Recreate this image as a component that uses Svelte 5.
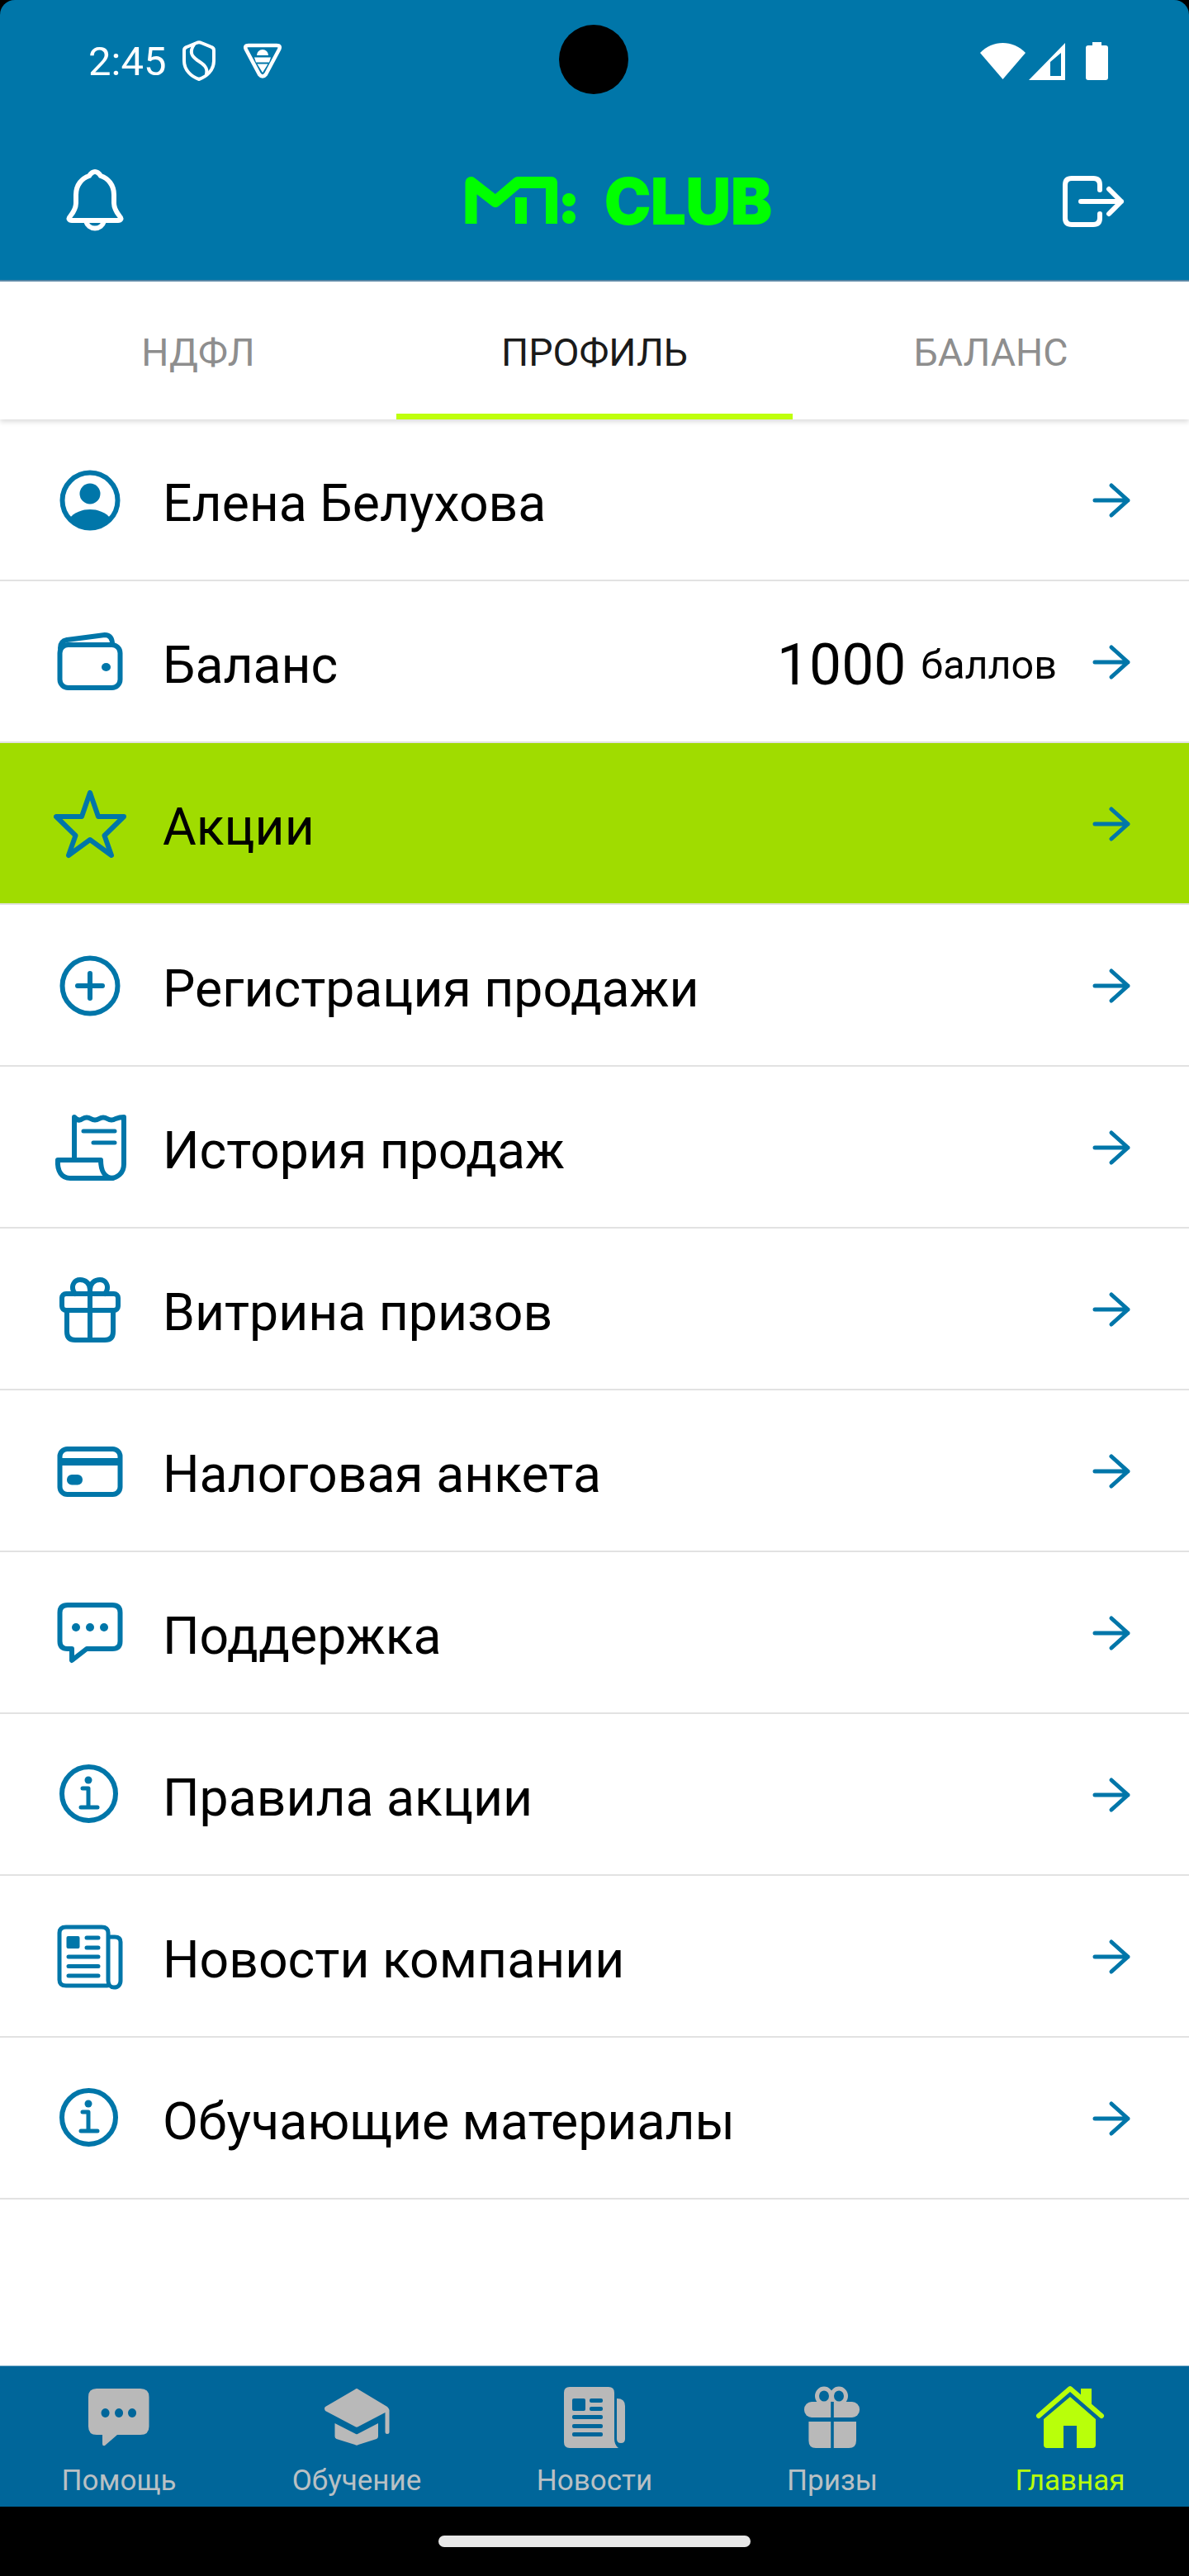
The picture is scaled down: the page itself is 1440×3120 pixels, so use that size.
<script>
    const tabs = [
        { label: "НДФЛ" },
        { label: "Профиль", active: true },
        { label: "Баланс" }
    ]

    const rows = [
        { icon: "person", label: "Елена Белухова" },
        { icon: "wallet", label: "Баланс", points: 1000 },
        { icon: "star", label: "Акции", promo: true },
        { icon: "plus", label: "Регистрация продажи" },
        { icon: "receipt", label: "История продаж" },
        { icon: "gift", label: "Витрина призов" },
        { icon: "card", label: "Налоговая анкета" },
        { icon: "chat", label: "Поддержка" },
        { icon: "info", label: "Правила акции" },
        { icon: "news", label: "Новости компании" },
        { icon: "info", label: "Обучающие материалы" }
    ]

    const navItems = [
        { icon: "chat", label: "Помощь" },
        { icon: "cap", label: "Обучение" },
        { icon: "news", label: "Новости" },
        { icon: "gift", label: "Призы" },
        { icon: "home", label: "Главная", active: true }
    ]
</script>

<div class="screen">
    <header class="top">
        <div class="camera"></div>
        <div class="status">
            <div class="status-left">
                <span class="time">2:45</span>
                <svg class="st-shield" viewBox="-22 -26 44 52">
                    <path d="M-3 -22 Q0 -23.500 3 -22 L15 -17 Q18 -16 18 -13 V0 C18 11 9 19 0 22 C-9 19 -18 11 -18 0 V-13 Q-18 -16 -15 -17 Z" />
                    <path d="M-6 -20 C-12 -11 -9 -6 -2 -1 C6 4 11 8 9 16" />
                </svg>
                <svg class="st-android" viewBox="-25 -23 50 46">
                    <path d="M-17 -19 H17 Q22.500 -19 20 -14 L4 16 Q0 21 -4 16 L-20 -14 Q-22.500 -19 -17 -19 Z" />
                    <path class="solid" d="M-7 -7 A7 7 0 0 1 7 -7 Z M-10 -4.500 H10 L8 1.500 H-8 Z M-6.500 3.500 H6.500 L0 14 Z" />
                </svg>
            </div>
            <div class="status-right">
                <svg class="st-wifi" width="55" height="44" viewBox="0 0 55 44">
                    <path d="M0 12 C15 -4 40 -4 55 12 L27.500 44 Z" />
                </svg>
                <svg class="st-signal" width="44" height="45" viewBox="0 0 44 45">
                    <path fill-rule="evenodd" d="M0 45 L44 0 V45 Z M26 23 V40 H39 V12 Z" />
                </svg>
                <svg class="st-battery" width="27" height="46" viewBox="0 0 27 46">
                    <path d="M8 0 H19 V4 H24 Q27 4 27 7 V43 Q27 46 24 46 H3 Q0 46 0 43 V7 Q0 4 3 4 H8 Z" />
                </svg>
            </div>
        </div>

        <div class="toolbar">
            <svg class="tool-icon" width="88" height="88" viewBox="-44 -44 88 88">
                <path d="M0 -36 C3 -36 5 -34 7 -31 C16 -28 23 -20 23 -8 V2 C23 8 26 13 30 18 C33 21 31 23 28 23 H-28 C-31 23 -33 21 -30 18 C-26 13 -23 8 -23 2 V-8 C-23 -20 -16 -28 -7 -31 C-5 -34 -3 -36 0 -36 Z" />
                <path d="M-11 24 A11.500 12 0 0 0 11 24" />
            </svg>

            <div class="logo">
                <svg width="140" height="70" viewBox="0 0 140 70">
                    <polyline points="7.500,62 7.500,12 37,35 64,12 105,12 105,62" />
                    <line x1="68" y1="30" x2="68" y2="62" />
                    <circle class="dot" cx="126" cy="33" r="8" />
                    <circle class="dot" cx="126" cy="54" r="8" />
                </svg>
                <span class="logo-text">CLUB</span>
            </div>

            <svg class="tool-icon" width="88" height="88" viewBox="-44 -44 88 88">
                <path d="M7 -14 V-20 Q7 -28 -1 -28 H-27 Q-35 -28 -35 -20 V20 Q-35 28 -27 28 H-1 Q7 28 7 20 V15" />
                <path d="M-16 0 H33 M18 -15 L33 0 L18 15" />
            </svg>
        </div>
    </header>

    <nav class="tabs">
        {#each tabs as tab}
            <div class="tab" class:active={tab.active}>{tab.label}</div>
        {/each}
    </nav>

    <main class="list">
        {#each rows as row}
            <div class="row" class:promo={row.promo}>
                <svg class="row-icon" width="88" height="88" viewBox="-44 -44 88 88">
                    {#if row.icon === "person"}
                        <circle r="33.500" />
                        <circle class="f" cy="-8" r="12.500" />
                        <path class="f" d="M-26 23 C-19 14 -9 11 0 11 C9 11 19 14 26 23 C12 36 -12 36 -26 23 Z" />
                    {:else if row.icon === "wallet"}
                        <rect x="-36.500" y="-21" width="73" height="52" rx="10" />
                        <path d="M-36 -17 C-36 -23 -33 -26 -28 -27 L18 -33 C24 -33 27 -29 27 -22" />
                        <ellipse class="f" cx="19.500" cy="6" rx="5.500" ry="5" />
                    {:else if row.icon === "star"}
                        <path d="M0 -38 L10 -9 H41 L17.500 14 L26 38 L0 19 L-26 38 L-17.500 14 L-41 -9 H-10 Z" />
                    {:else if row.icon === "plus"}
                        <circle r="33.500" />
                        <path d="M-15 0 H15 M0 -15 V15" />
                    {:else if row.icon === "receipt"}
                        <path d="M-19 12 V-37 Q-14 -31 -9 -35 Q-4 -38 1 -35 Q6 -32 11 -35 Q16 -38 21 -35 Q26 -32 31 -35 Q36 -37 41 -37 V20 C41 31 33 37 24 37 H-24 C-34 37 -40 29 -39 15 H13 C13 28 18 37 28 37" />
                        <path class="thin" d="M-8 -20 H30 M4 -6 H30" />
                    {:else if row.icon === "gift"}
                        <rect x="-34" y="-19" width="68" height="20" rx="5" />
                        <path d="M-28 2 V27 Q-28 37 -18 37 H18 Q28 37 28 27 V2 M0 -19 V37" />
                        <path d="M0 -19 V-24 C0 -32 -6 -36 -12 -36 C-19 -36 -23 -29 -20 -22 L-18 -19 M0 -24 C0 -32 6 -36 12 -36 C19 -36 23 -29 20 -22 L18 -19" />
                    {:else if row.icon === "card"}
                        <rect x="-36.500" y="-27" width="73" height="55" rx="9" />
                        <rect class="f" x="-36" y="-16" width="72" height="9" />
                        <rect class="f" x="-28" y="4" width="19" height="12.500" rx="6" />
                    {:else if row.icon === "chat"}
                        <path d="M-27 -34 H27 Q36.500 -34 36.500 -25 V10 Q36.500 19 27 19 H-4 L-22 33 V19 H-27 Q-36.500 19 -36.500 10 V-25 Q-36.500 -34 -27 -34 Z" />
                        <circle class="f" cx="-17" cy="-7" r="5" />
                        <circle class="f" cy="-7" r="5" />
                        <circle class="f" cx="17" cy="-7" r="5" />
                    {:else if row.icon === "info"}
                        <circle cx="-1.500" cy="-1.500" r="32.500" />
                        <circle class="f" cx="-2" cy="-18" r="4.500" />
                        <path class="thin" d="M-9 -8 H-2 V14 M-11 15 H9" />
                    {:else if row.icon === "news"}
                        <path class="thin" d="M21 35 H-29 Q-37 35 -37 28 V-29 Q-37 -36 -29 -36 H14 Q22 -36 22 -29 V29 C22 34 25 37 29 37 C34 37 37 34 37 29 V-18 Q37 -24 30 -24 H22" />
                        <rect class="f" x="-28.500" y="-25" width="16" height="15" rx="2" />
                        <path class="thin" d="M-4 -23 H10 M-4 -11 H10 M-26 0 H10 M-26 11.500 H10 M-26 23 H10" />
                    {/if}
                </svg>
                <span class="row-label">{row.label}</span>
                {#if row.points}
                    <span class="points">{row.points}</span>
                    <span class="points-unit">баллов</span>
                {/if}
                <svg class="arrow" width="48" height="48" viewBox="-24 -24 48 48">
                    <path d="M-20 0 H20 M0 -18 L20 0 L0 18" />
                </svg>
            </div>
        {/each}
    </main>

    <footer class="bottom-nav">
        {#each navItems as item}
            <div class="nav-item" class:active={item.active}>
                <svg class="nav-icon" width="88" height="88" viewBox="-44 -44 88 88">
                    {#if item.icon === "chat"}
                        <path fill-rule="evenodd" d="M-27 -35 H26 Q36.500 -35 36.500 -25 V11 Q36.500 21 26 21 H-2 L-17 34 Q-20 35 -20 32 V21 H-27 Q-37 21 -37 11 V-25 Q-37 -35 -27 -35 Z M-16.500 -11 A5 5.500 0 1 0 -16.400 -11 Z M0 -11 A5 5.500 0 1 0 0.100 -11 Z M16 -11 A5 5.500 0 1 0 16.100 -11 Z" />
                    {:else if item.icon === "cap"}
                        <path d="M-2 -34 Q0 -36 2 -34 L37 -13 Q39 -11 39.500 -9 V18 Q39.500 20 37 20 Q34.500 20 34.500 18 V-6 L2 11 Q0 12.500 -2 11 L-38 -8 Q-40 -11 -38 -13 Z" />
                        <path d="M-26.500 7 L-1 20 Q0 20.500 1 20 L26 7 V23 Q26 25 24 26 L2 33 Q0 34.500 -2 33 L-24.500 26 Q-26.500 25 -26.500 23 Z" />
                    {:else if item.icon === "news"}
                        <path d="M-30 -37 H17 Q24 -37 24 -30 V26 Q24 33 29 37 H-30 Q-37 37 -37 30 V-30 Q-37 -37 -30 -37 Z" />
                        <path d="M27 -23 Q37 -23 37 -14 V26 Q37 31 32 31 Q27 31 27 26 Z" />
                        <rect class="cut" x="-27" y="-23" width="16" height="15" rx="2" />
                        <rect class="cut" x="-6" y="-23" width="16" height="5" rx="2" />
                        <rect class="cut" x="-6" y="-13" width="16" height="5" rx="2" />
                        <rect class="cut" x="-27" y="-3" width="37" height="5" rx="2" />
                        <rect class="cut" x="-27" y="8" width="37" height="5" rx="2" />
                        <rect class="cut" x="-27" y="18" width="37" height="5" rx="2" />
                    {:else if item.icon === "gift"}
                        <rect x="-34" y="-19" width="67" height="19" rx="9" />
                        <path d="M-28.600 5 H-1.800 V37 H-20 Q-28.600 37 -28.600 28 Z M1.800 5 H29 V28 Q29 37 20 37 H1.800 Z" />
                        <ellipse class="ring" cx="-10" cy="-26" rx="8.500" ry="9" />
                        <ellipse class="ring" cx="8" cy="-26" rx="8.500" ry="9" />
                        <rect class="cut" x="-1.800" y="-19" width="3.600" height="19" />
                    {:else if item.icon === "home"}
                        <path class="roof" d="M-38 -2 L0 -35 L38 -2" />
                        <path d="M13 -35 H26 V-14 L13 -26 Z" />
                        <path fill-rule="evenodd" d="M0 -25 L31 2 V33 Q31 37 27 37 H8 V10 H-8 V37 H-28 Q-32 37 -32 33 V2 Z" />
                    {/if}
                </svg>
                <span class="nav-label">{item.label}</span>
            </div>
        {/each}
    </footer>

    <div class="gesture-bar">
        <div class="gesture-pill"></div>
    </div>
</div>

<style>
    :global(body) {
        margin: 0;
        background: #000;
    }

    .screen {
        display: flex;
        flex-direction: column;
        height: 3120px;
        background: #000;
        font-family: Roboto, "Noto Sans", sans-serif;
        color: #000;
    }

    .top {
        position: relative;
        background: #0076a9;
        border-bottom: 2px solid #5b8ba9;
        border-radius: 18px 18px 0 0;
        height: 339px;
        flex: none;
    }

    .camera {
        position: absolute;
        left: 677px;
        top: 30px;
        width: 84px;
        height: 84px;
        border-radius: 50%;
        background: #000;
    }

    .status {
        display: flex;
        justify-content: space-between;
        align-items: center;
        height: 148px;
        padding: 0 98px 0 107px;
        color: #fff;
    }

    .status-left {
        display: flex;
        align-items: center;
    }

    .status-right {
        display: flex;
        align-items: center;
    }

    .time {
        font-size: 49px;
        line-height: 1;
        width: 112px;
    }

    .st-shield {
        width: 44px;
        height: 52px;
        fill: none;
        stroke: #fff;
        stroke-width: 4;
        stroke-linejoin: round;
        stroke-linecap: round;
    }

    .st-android {
        width: 50px;
        height: 46px;
        margin-left: 30px;
        fill: none;
        stroke: #fff;
        stroke-width: 4.5;
        stroke-linejoin: round;
    }

    .st-android .solid {
        fill: #fff;
        stroke: none;
    }

    .st-wifi,
    .st-signal,
    .st-battery {
        fill: #fff;
    }

    .st-signal {
        margin-left: 4px;
    }

    .st-battery {
        margin-left: 25px;
    }

    .toolbar {
        display: flex;
        justify-content: space-between;
        align-items: center;
        height: 191px;
        padding: 0 71px;
    }

    .tool-icon {
        fill: none;
        stroke: #fff;
        stroke-width: 6;
        stroke-linecap: round;
        stroke-linejoin: round;
    }

    .logo {
        display: flex;
        align-items: center;
        gap: 29px;
        margin-left: 58px;
        color: #00ff00;
    }

    .logo svg {
        fill: none;
        stroke: #00ff00;
        stroke-width: 14;
        stroke-linejoin: round;
    }

    .logo .dot {
        fill: #00ff00;
        stroke: none;
    }

    .logo-text {
        font-family: Inter, sans-serif;
        font-weight: 800;
        font-size: 75px;
        line-height: 1;
        -webkit-text-stroke: 2px #00ff00;
    }

    .tabs {
        display: grid;
        grid-template-columns: repeat(3, 1fr);
        height: 167px;
        flex: none;
        background: #fff;
        box-shadow: 0 3px 6px rgba(0, 0, 0, 0.14);
        position: relative;
        z-index: 1;
    }

    .tab {
        display: flex;
        align-items: center;
        justify-content: center;
        padding: 12px 0 7px;
        font-size: 46.500px;
        text-transform: uppercase;
        color: #8e8e8e;
    }

    .tab.active {
        color: #1a1a1a;
        padding-bottom: 0;
        border-bottom: 7px solid #bfff0c;
    }

    .list {
        flex: 1;
        background: #fff;
    }

    .row {
        display: flex;
        align-items: center;
        height: 194px;
        padding: 0 70px 0 65px;
        border-bottom: 2px solid #e2e2e2;
    }

    .row.promo {
        background: #a0dc00;
    }

    .row-icon {
        flex: none;
        fill: none;
        stroke: #0076a9;
        stroke-width: 6;
        stroke-linecap: round;
        stroke-linejoin: round;
        margin: 2px 44px 0 0;
    }

    .row-icon .f {
        fill: #0076a9;
        stroke: none;
    }

    .row-icon .thin {
        stroke-width: 5;
    }

    .row-label,
    .points,
    .points-unit {
        padding-top: 9px;
    }

    .row-label {
        flex: 1;
        font-size: 62.500px;
    }

    .points {
        font-size: 69.500px;
        margin-right: 18px;
    }

    .points-unit {
        font-size: 48.500px;
        margin-right: 42px;
    }

    .arrow {
        flex: none;
        margin-top: 2px;
        fill: none;
        stroke: #0076a9;
        stroke-width: 5;
        stroke-linecap: round;
        stroke-linejoin: round;
    }

    .bottom-nav {
        display: grid;
        grid-template-columns: repeat(5, 1fr);
        flex: none;
        height: 170px;
        overflow: hidden;
        background: #00669a;
        border-top: 1px solid #7fb0cb;
    }

    .nav-item {
        display: flex;
        flex-direction: column;
        align-items: center;
        padding-top: 18px;
        color: #b9c0c4;
    }

    .nav-icon {
        flex: none;
        fill: #b9b9b9;
    }

    .nav-icon .cut {
        fill: #00669a;
    }

    .nav-icon .ring {
        fill: none;
        stroke: #b9b9b9;
        stroke-width: 5;
    }

    .nav-icon .roof {
        fill: none;
        stroke: #b9ff0a;
        stroke-width: 6;
        stroke-linecap: round;
        stroke-linejoin: round;
    }

    .nav-item.active {
        color: #b9ff0a;
    }

    .nav-item.active .nav-icon {
        fill: #b9ff0a;
    }

    .nav-label {
        margin-top: 13px;
        font-size: 35px;
        line-height: 40px;
        white-space: nowrap;
    }

    .gesture-bar {
        display: flex;
        align-items: center;
        justify-content: center;
        height: 84px;
        flex: none;
        background: #000;
    }

    .gesture-pill {
        width: 378px;
        height: 14px;
        border-radius: 7px;
        background: #e8e8e8;
    }
</style>
